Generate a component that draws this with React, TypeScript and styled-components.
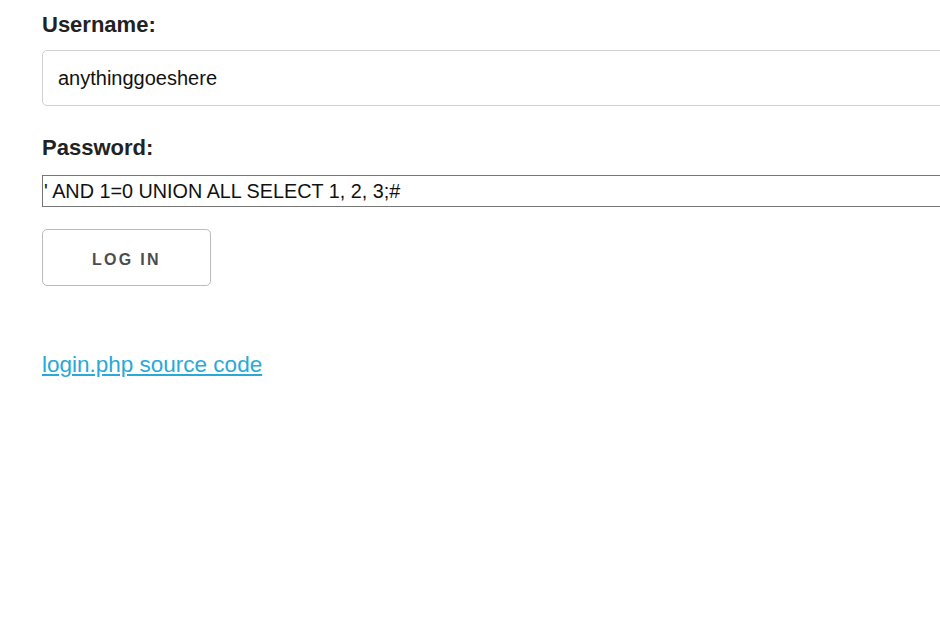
import styled, { createGlobalStyle } from 'styled-components';

const Global = createGlobalStyle`
  html, body {
    margin: 0;
    padding: 0;
    background: #ffffff;
    overflow: hidden;
  }
`;

const Page = styled.div`
  padding: 12px 0 0 42px;
  font-family: 'Liberation Sans', Arial, sans-serif;
  color: #222222;
  overflow: hidden;
`;

const Form = styled.form`
  display: flex;
  flex-direction: column;
  width: 1100px;
`;

const Label = styled.label`
  display: block;
  font-size: 22px;
  font-weight: bold;
  line-height: 26px;
  margin-bottom: 12px;
`;

const TextInput = styled.input<{ $plain?: boolean }>`
  box-sizing: border-box;
  width: 100%;
  font-family: 'Liberation Sans', Arial, sans-serif;
  color: #111111;
  outline: none;
  ${(p) =>
    p.$plain
      ? `
    height: 32px;
    margin-top: 2px;
    padding: 0 1px;
    font-size: 19.8px;
    border: 1px solid #767676;
    border-radius: 0;
    margin-bottom: 22px;
  `
      : `
    height: 56px;
    padding: 0 15px;
    font-size: 20px;
    border: 1px solid #d0d0d0;
    border-radius: 5px;
    margin-bottom: 29px;
  `}
`;

const Button = styled.button`
  box-sizing: border-box;
  width: 169px;
  height: 57px;
  padding: 4px 0 0;
  background: #ffffff;
  border: 1px solid #bbbbbb;
  border-radius: 5px;
  font-family: 'Liberation Sans', Arial, sans-serif;
  font-size: 16px;
  font-weight: bold;
  letter-spacing: 2.3px;
  color: #4d4d4d;
  cursor: pointer;
`;

const SourceLink = styled.a`
  display: inline-block;
  margin-top: 66px;
  font-size: 22.5px;
  color: #2aa8d8;
  text-decoration: underline;
`;

export default function App() {
  return (
    <Page>
      <Global />
      <Form onSubmit={(e) => e.preventDefault()}>
        <Label htmlFor="username">Username:</Label>
        <TextInput id="username" defaultValue="anythinggoeshere" />
        <Label htmlFor="password">Password:</Label>
        <TextInput id="password" $plain defaultValue="' AND 1=0 UNION ALL SELECT 1, 2, 3;#" />
        <div>
          <Button type="submit">LOG IN</Button>
        </div>
      </Form>
      <SourceLink href="#">login.php source code</SourceLink>
    </Page>
  );
}
